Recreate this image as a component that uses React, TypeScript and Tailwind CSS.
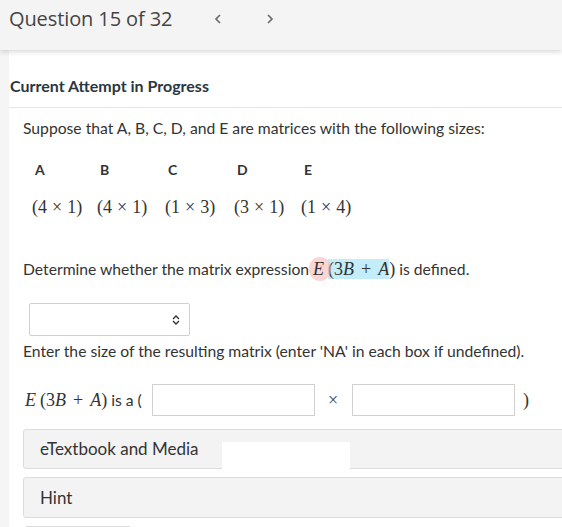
import React from "react";

function Op({ c, m = "mx-[4px]" }: { c: string; m?: string }) {
  return <span className={m}>{c}</span>;
}

function Size({ a, b }: { a: string; b: string }) {
  return (
    <span className="font-['Liberation_Serif',serif] text-[18px] leading-[20px] whitespace-nowrap">
      ({a}
      <Op c="×" m="mx-[5px]" />
      {b})
    </span>
  );
}

export default function App() {
  const sizes: [string, string][] = [["4", "1"], ["4", "1"], ["1", "3"], ["3", "1"], ["1", "4"]];
  const letters = ["A", "B", "C", "D", "E"];
  const widths = ["w-[65px]", "w-[68px]", "w-[69px]", "w-[67px]", "w-[60px]"];
  return (
    <div className="w-[562px] h-[527px] overflow-hidden bg-white relative font-['Lato',sans-serif] text-[#333]">
      <div className="h-[50px] bg-[#f4f4f4] flex items-center pl-[9px] relative z-10 shadow-[0_2px_5px_rgba(0,0,0,0.15)] pb-[13px]">
        <span className="font-['Open_Sans',sans-serif] text-[20px] text-[#444] tracking-[-0.1px]">Question 15 of 32</span>
        <span className="ml-[41px]">
          <svg width="10" height="12" viewBox="0 0 10 12"><path d="M7 2 L3 6 L7 10" fill="none" stroke="#666" strokeWidth="1.6" /></svg>
        </span>
        <span className="ml-[42px]">
          <svg width="10" height="12" viewBox="0 0 10 12"><path d="M3 2 L7 6 L3 10" fill="none" stroke="#666" strokeWidth="1.6" /></svg>
        </span>
      </div>
      <div className="flex h-[477px]">
        <div className="w-[9px] bg-[#f5f5f5] shrink-0" />
        <div className="flex-1 min-w-0">
          <div className="h-[58px] border-b border-[#e6e6e6] flex items-end pb-[9px] pl-[1px]">
            <span className="font-bold text-[16px] text-[#2c3640]">Current Attempt in Progress</span>
          </div>
          <div className="pl-[14px]">
            <p className="text-[15.7px] mt-[10px] leading-[20px]">Suppose that A, B, C, D, and E are matrices with the following sizes:</p>
            <div className="mt-[22px] flex pl-[9px]">
              {letters.map((l, i) => (
                <div key={l} className={`flex flex-col ${widths[i]}`}>
                  <span className="font-bold text-[14px] text-[#333] pl-[3px] leading-[20px]">{l}</span>
                  <span className="mt-[16px] leading-[22px] h-[22px]">
                    <Size a={sizes[i][0]} b={sizes[i][1]} />
                  </span>
                </div>
              ))}
            </div>
            <p className="text-[15.7px] mt-[40px] leading-[22px] h-[22px] whitespace-nowrap">
              Determine whether the matrix expression{" "}
              <span className="relative">
                <span className="absolute left-[-4px] top-[-3px] w-[22px] h-[24px] rounded-full bg-[#f8b8b8]/60" />
                <span className="relative font-['Liberation_Serif',serif] text-[18px] italic leading-[20px]">E</span>
              </span>
              <span className="font-['Liberation_Serif',serif] text-[18px] leading-[20px]">
                <span className="bg-[#c3edf9] ml-[4px]">
                  (3<i>B</i>
                  <Op c="+" m="mx-[7px]" />
                  <i>A</i>
                </span>
                )
              </span>{" "}
              is defined.
            </p>
            <div className="mt-[23px] ml-[6px] w-[161px] h-[33px] border border-[#d0d0d0] rounded-[2px] flex items-center justify-end pr-[8px]">
              <svg width="10" height="12" viewBox="0 0 10 12">
                <path d="M2 5 L5 2 L8 5 M2 7 L5 10 L8 7" fill="none" stroke="#333" strokeWidth="1.4" />
              </svg>
            </div>
            <p className="text-[15.7px] mt-[5px] leading-[20px]">Enter the size of the resulting matrix (enter 'NA' in each box if undefined).</p>
            <div className="mt-[23px] flex items-center h-[32px]">
              <span className="pl-[2px] w-[127px] whitespace-nowrap shrink-0 leading-[20px]">
                <span className="font-['Liberation_Serif',serif] text-[18px]">
                  <i>E</i>
                  <span className="ml-[4px]">(3<i>B</i></span>
                  <Op c="+" m="mx-[7px]" />
                  <i>A</i>)
                </span>
                <span className="text-[15.7px]"> is a (</span>
              </span>
              <div className="ml-[2px] w-[163px] h-[32px] border border-[#d0d0d0] shrink-0" />
              <span className="ml-[13px] w-[10px] shrink-0 text-[18px] text-[#444] font-['Liberation_Serif',serif] leading-[20px]">×</span>
              <div className="ml-[14px] w-[163px] h-[32px] border border-[#d0d0d0] shrink-0" />
              <span className="ml-[8px] shrink-0 text-[18px] font-['Liberation_Serif',serif] leading-[20px]">)</span>
            </div>
            <div className="mt-[13px] relative h-[40px] w-[560px] bg-[#f3f3f3] border border-[#dcdcdc] rounded-[3px] flex items-center pl-[16px]">
              <span className="text-[17px] text-[#333]">eTextbook and Media</span>
              <div className="absolute left-[198px] top-[12px] w-[128px] h-[29px] bg-white" />
            </div>
            <div className="mt-[8px] h-[41px] w-[560px] bg-[#f3f3f3] border border-[#dcdcdc] rounded-[3px] flex items-center pl-[16px]">
              <span className="text-[17px] text-[#333]">Hint</span>
            </div>
            <div className="mt-[8px] ml-[3px] w-[104px] h-[10px] border-t border-[#dcdcdc]" />
          </div>
        </div>
      </div>
    </div>
  );
}
